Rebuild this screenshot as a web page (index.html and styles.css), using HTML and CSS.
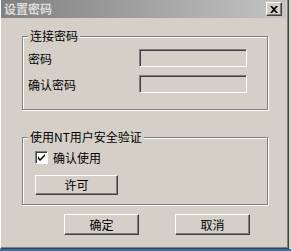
FILE: index.html
```html
<html>
<head>
<title>设置密码</title>
<link rel="stylesheet" href="styles.css">
</head>
<body>
<div class="window">
	<div class="titlebar">
		<span class="title">设置密码</span>
		<div class="close">
			<svg width="8" height="7" viewBox="0 0 8 7"><path d="M0 0h2l2 2 2-2h2l-3 3.5 3 3.5h-2l-2-2-2 2h-2l3-3.5z" fill="#000"/></svg>
		</div>
	</div>
	<div class="content">
		<fieldset class="group group-pwd">
			<legend>连接密码</legend>
			<div class="row">
				<label class="label">密码</label>
				<div class="field"></div>
			</div>
			<div class="row">
				<label class="label">确认密码</label>
				<div class="field"></div>
			</div>
		</fieldset>
		<fieldset class="group group-nt">
			<legend>使用NT用户安全验证</legend>
			<div class="check-row">
				<span class="checkbox">
					<svg width="7" height="7" viewBox="0 0 7 7"><path d="M0 2v3l2 2 5-5v-2l-5 5z" fill="#000"/></svg>
				</span>
				<span>确认使用</span>
			</div>
			<div class="btn btn-allow">许可</div>
		</fieldset>
		<div class="buttons">
			<div class="btn">确定</div>
			<div class="btn">取消</div>
		</div>
	</div>
</div>
<div class="taskbar"></div>
</body>
</html>
```
FILE: styles.css
```css
html, body {
	margin: 0;
	padding: 0;
	background: #d4d0c8;
	font: 12px "Noto Sans CJK SC", "DejaVu Sans", sans-serif;
	color: #000;
}
.window {
	width: 287px;
	height: 248px;
	border-left: 1px solid #fff;
	border-right: 1px solid #404040;
	border-bottom: 1px solid #404040;
	box-shadow: inset -1px -1px 0 #808080;
	box-sizing: content-box;
}
.titlebar {
	height: 18px;
	margin-right: 2px;
	background: linear-gradient(to right, #808080, #c4c4c4);
	display: flex;
	align-items: center;
	justify-content: space-between;
	padding: 0 4px 0 3px;
}
.title {
	color: #dcdcdc;
	font-weight: bold;
	line-height: 14px;
}
.close {
	width: 14px;
	height: 12px;
	background: #d4d0c8;
	border: 1px solid;
	border-color: #fff #404040 #404040 #fff;
	box-shadow: inset -1px -1px 0 #808080;
	display: flex;
	align-items: center;
	justify-content: center;
}
.content {
	padding: 11px 0 0 21px;
}
.group {
	width: 234px;
	margin: 0;
	padding: 5px 5px 15px 5px;
	border: 1px solid #808080;
	box-shadow: inset 1px 1px 0 #fff, 1px 1px 0 #fff;
}
.group legend {
	padding: 0 2px;
	line-height: 14px;
	background: #d4d0c8;
}
.row {
	display: flex;
	align-items: center;
	height: 20px;
}
.row + .row {
	margin-top: 6px;
}
.label {
	width: 111px;
}
.field {
	width: 106px;
	height: 16px;
	border: 1px solid;
	border-color: #808080 #fff #fff #808080;
	box-shadow: inset 1px 1px 0 #404040;
}
.group-nt {
	margin-top: 20px;
	padding: 7px 5px 9px 5px;
}
.check-row {
	display: flex;
	align-items: center;
	height: 13px;
	margin-left: 7px;
}
.checkbox {
	width: 11px;
	height: 11px;
	margin-right: 5px;
	background: #fff;
	border: 1px solid;
	border-color: #808080 #fff #fff #808080;
	box-shadow: inset 1px 1px 0 #404040;
	display: flex;
	align-items: center;
	justify-content: center;
}
.btn {
	width: 73px;
	height: 19px;
	line-height: 19px;
	text-align: center;
	background: #d4d0c8;
	border: 1px solid;
	border-color: #fff #404040 #404040 #fff;
	box-shadow: inset -1px -1px 0 #808080;
}
.btn-allow {
	width: 81px;
	height: 18px;
	line-height: 18px;
	margin: 11px 0 0 7px;
}
.buttons {
	display: flex;
	gap: 36px;
	margin: 9px 0 0 42px;
}
.taskbar {
	height: 2px;
	background: #3a6ea5;
}
```
